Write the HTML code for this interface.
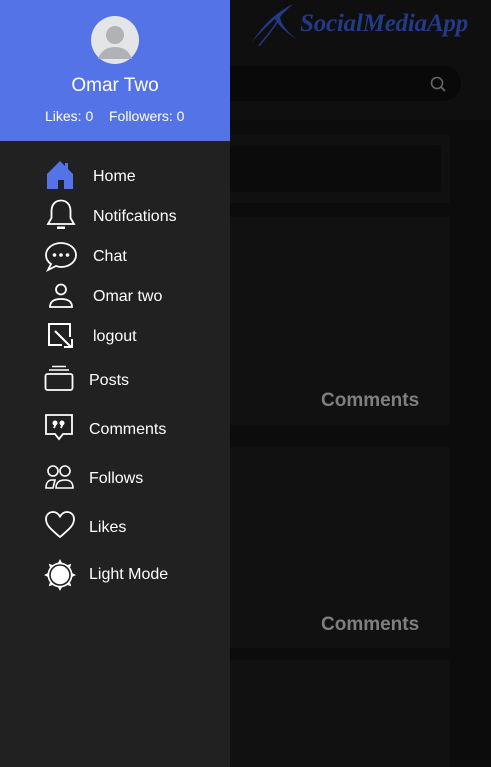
<!DOCTYPE html>
<html><head><style>
body{margin:0;width:491px;height:767px;overflow:hidden;background:#0c0c0c;font-family:"Liberation Sans",sans-serif;position:relative}
.abs{position:absolute}
.side{left:0;top:0;width:230px;height:767px;background:#212121}
.top{left:0;top:0;width:230px;height:141px;background:#5473e6;color:#fff;text-align:center}
.item{position:absolute;color:#fff;font-size:16px}
.ic{position:absolute}
.cm{position:absolute;color:#7f7f7f;font-size:19px;font-weight:bold;left:321px}
</style></head><body>
<div class="abs" style="left:230px;top:0;width:261px;height:120px;background:#0f0f0f"></div>
<div class="abs" style="left:200px;top:66px;width:261px;height:35px;border-radius:18px;background:#090909"></div>
<svg class="abs" style="left:429px;top:75px" width="18" height="18" viewBox="0 0 18 18"><circle cx="8" cy="8" r="5.5" fill="none" stroke="#666" stroke-width="1.6"/><path d="M12 12l4 4" stroke="#666" stroke-width="1.8"/></svg>
<svg class="abs" style="left:251px;top:2px" width="48" height="44" viewBox="0 0 48 44"><path d="M1 40 C10 30 18 22 24 17 C27 22 32 28 45 37 C34 27 30 22 29 15 C33 10 38 6 42 2 C36 5 30 9 26 12 C18 18 9 28 1 40Z" fill="#223a88"/><path d="M8 44 C14 36 20 30 26 20" fill="none" stroke="#223a88" stroke-width="1.5"/></svg>
<div class="abs" style="left:300px;top:10px;font-family:'Liberation Serif',serif;font-style:italic;font-weight:bold;font-size:25px;letter-spacing:-0.2px;color:#223a88">SocialMediaApp</div>
<div class="abs" style="left:230px;top:135px;width:220px;height:68px;background:#101010"></div>
<div class="abs" style="left:230px;top:145px;width:211px;height:47px;background:#0b0b0b;border-radius:4px"></div>
<div class="abs" style="left:230px;top:217px;width:220px;height:208px;background:#111"></div>
<div class="abs" style="left:230px;top:447px;width:220px;height:201px;background:#111"></div>
<div class="abs" style="left:230px;top:660px;width:220px;height:107px;background:#111"></div>
<div class="cm" style="top:390px">Comments</div>
<div class="cm" style="top:614px">Comments</div>

<div class="abs side"></div>
<div class="abs top">
<svg style="position:absolute;left:91px;top:16px" width="48" height="48" viewBox="0 0 48 48"><circle cx="24" cy="24" r="24" fill="#e4e5e6"/><circle cx="24" cy="19" r="9" fill="#b0b3b6"/><path d="M7 43 C10 34 17 31 24 31 C31 31 38 34 41 43 Z" fill="#b0b3b6"/></svg>
<div style="position:absolute;top:75px;width:230px;font-size:19px">Omar Two</div>
<div style="position:absolute;top:108px;left:45px;font-size:14px">Likes: 0</div>
<div style="position:absolute;top:108px;left:109px;font-size:14px">Followers: 0</div>
</div>

<svg class="ic" style="left:47px;top:161px" width="28" height="28" viewBox="0 0 28 28"><path d="M0 13 L13 0 L18 5 V2 H21 V8 L26 13 V28 H17 V19 H11 V28 H0Z" fill="#5473e6"/></svg>
<div class="item" style="left:93px;top:168px">Home</div>
<svg class="ic" style="left:46px;top:199px" width="30" height="32" viewBox="0 0 30 32"><path d="M15 1.5 C9 1.5 5.5 6 5.5 12 V19 L2 25 H28 L24.5 19 V12 C24.5 6 21 1.5 15 1.5Z" fill="none" stroke="#fff" stroke-width="1.8"/><path d="M11 27.5 H19 V30 H11Z" fill="#fff"/></svg>
<div class="item" style="left:93px;top:208px">Notifcations</div>
<svg class="ic" style="left:44px;top:241px" width="34" height="32" viewBox="0 0 34 32"><path d="M17 2 C8.5 2 2 7.5 2 14 C2 18 4 21 7 23 L4 29 L12 25 C13.5 25.5 15 26 17 26 C25.5 26 32 20.5 32 14 C32 7.5 25.5 2 17 2Z" fill="none" stroke="#fff" stroke-width="1.8"/><circle cx="10.5" cy="14" r="1.8" fill="#fff"/><circle cx="17" cy="14" r="1.8" fill="#fff"/><circle cx="23.5" cy="14" r="1.8" fill="#fff"/></svg>
<div class="item" style="left:93px;top:248px">Chat</div>
<svg class="ic" style="left:48px;top:283px" width="26" height="26" viewBox="0 0 26 26"><circle cx="13" cy="6.5" r="5" fill="none" stroke="#fff" stroke-width="1.8"/><path d="M2 24 C2 18 7 16 13 16 C19 16 24 18 24 24Z" fill="none" stroke="#fff" stroke-width="1.8"/></svg>
<div class="item" style="left:93px;top:288px">Omar two</div>
<svg class="ic" style="left:47px;top:322px" width="28" height="28" viewBox="0 0 28 28"><path d="M15 23 H2 V2 H23 V15" fill="none" stroke="#fff" stroke-width="2"/><path d="M8 9 L24 25 M17 25 H25 V17" fill="none" stroke="#fff" stroke-width="2"/></svg>
<div class="item" style="left:93px;top:328px">logout</div>
<svg class="ic" style="left:44px;top:365px" width="32" height="28" viewBox="0 0 32 28"><rect x="1.5" y="9" width="27" height="16" rx="2" fill="none" stroke="#fff" stroke-width="1.8"/><path d="M5 5 H25 M8 1.5 H22" stroke="#fff" stroke-width="1.5"/></svg>
<div class="item" style="left:89px;top:372px">Posts</div>
<svg class="ic" style="left:44px;top:413px" width="32" height="30" viewBox="0 0 32 30"><path d="M2 2 H28 V21 H19 L15 26 L11 21 H2Z" fill="none" stroke="#fff" stroke-width="1.8"/><circle cx="11" cy="10" r="2.5" fill="#fff"/><circle cx="18" cy="10" r="2.5" fill="#fff"/><path d="M12 10 L10 15 M19 10 L17 15" stroke="#fff" stroke-width="1.8"/></svg>
<div class="item" style="left:89px;top:421px">Comments</div>
<svg class="ic" style="left:44px;top:464px" width="32" height="26" viewBox="0 0 32 26"><circle cx="9" cy="7" r="5" fill="none" stroke="#fff" stroke-width="1.6"/><circle cx="21" cy="7" r="5" fill="none" stroke="#fff" stroke-width="1.6"/><path d="M2 24 C2 18 5 16 8 16 H11 L9 24Z M12 24 C12 18 16 16 21 16 C26 16 29 18 29 24Z" fill="none" stroke="#fff" stroke-width="1.6"/></svg>
<div class="item" style="left:89px;top:470px">Follows</div>
<svg class="ic" style="left:44px;top:510px" width="32" height="30" viewBox="0 0 32 30"><path d="M16 27 C8 20 2 16 2 9 C2 5 5 2 9 2 C12 2 14.5 4 16 6.5 C17.5 4 20 2 23 2 C27 2 30 5 30 9 C30 16 24 20 16 27Z" fill="none" stroke="#fff" stroke-width="1.8"/></svg>
<div class="item" style="left:89px;top:519px">Likes</div>
<svg class="ic" style="left:44px;top:559px" width="32" height="32" viewBox="0 0 32 32"><g fill="#fff"><circle cx="16" cy="16" r="12.5"/><path d="M16 0 L18 4 H14Z M16 32 L18 28 H14Z M0 16 L4 14 V18Z M32 16 L28 14 V18Z M4.7 4.7 L8.5 6 L6 8.5Z M27.3 27.3 L23.5 26 L26 23.5Z M4.7 27.3 L6 23.5 L8.5 26Z M27.3 4.7 L26 8.5 L23.5 6Z"/></g><circle cx="16" cy="16" r="10" fill="none" stroke="#212121" stroke-width="1.6"/></svg>
<div class="item" style="left:89px;top:566px">Light Mode</div>
</body></html>
